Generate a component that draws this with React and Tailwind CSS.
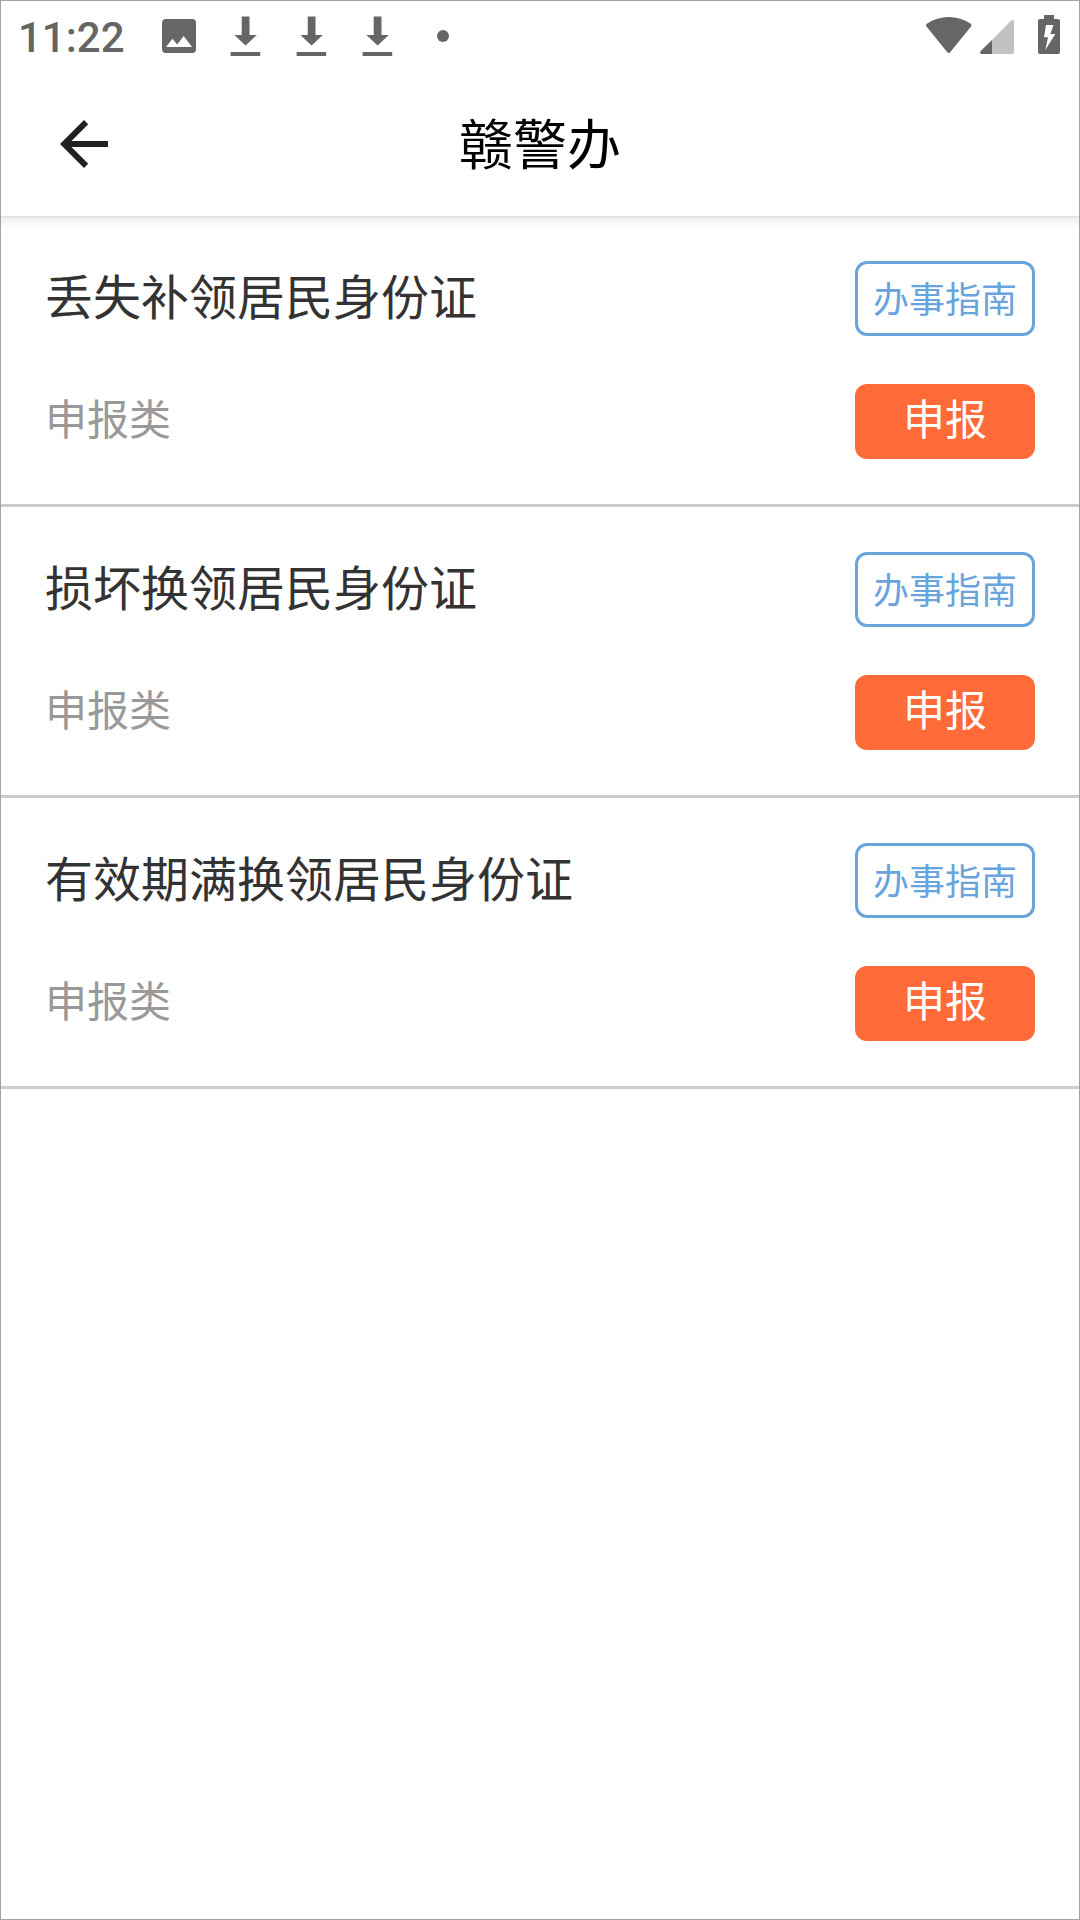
// Page d'un service — liste des démarches avec guide et déclaration

const items = [
  { id: 1, title: '丢失补领居民身份证', type: '申报类' },
  { id: 2, title: '损坏换领居民身份证', type: '申报类' },
  { id: 3, title: '有效期满换领居民身份证', type: '申报类' },
]

function DownloadIcon() {
  return (
    <svg className="w-[66px] h-[72px]" viewBox="0 0 66 72" fill="#666666">
      <path d="M29.700 16.500h7.800V35H44.800L33.600 45.500 22.400 35h7.300z" />
      <path d="M18.600 52h29.600v4H18.600z" />
    </svg>
  )
}

// Barre d'état Android
function StatusBar() {
  return (
    <div className="h-[72px] -mt-px flex items-start justify-between text-[#666666]">
      <div className="flex">
        <span className="w-[145px] pl-[17px] pt-[8px] font-[Roboto] font-medium text-[42px] leading-[60px]">11:22</span>
        <svg className="w-[66px] h-[72px]" viewBox="0 0 66 72" fill="currentColor">
          <path
            fillRule="evenodd"
            d="M20 19h26a4 4 0 0 1 4 4v26a4 4 0 0 1-4 4H20a4 4 0 0 1-4-4V23a4 4 0 0 1 4-4zM20 47h26l-8.300-11-6.500 8.500-4.700-5.700z"
          />
        </svg>
        <DownloadIcon />
        <DownloadIcon />
        <DownloadIcon />
        <svg className="w-[66px] h-[72px]" viewBox="0 0 66 72" fill="currentColor">
          <circle cx="33" cy="36" r="6" />
        </svg>
      </div>

      {/* Wi-Fi, réseau, batterie */}
      <svg className="w-[159px] h-[72px]" viewBox="920 0 159 72" fill="currentColor">
        <path d="M926.500 26.500c-.8-1-.7-2 .3-2.800C940 14.800 957.500 14.800 970.700 23.700c1 .8 1.100 1.800.3 2.800L950.300 52c-1.200 1.400-2 1.400-3.200 0z" />
        <path d="M1014 22v30q0 2-2 2h-20V40l18.500-18.700q3.500-3 3.500.7z" fill="#c2c2c2" />
        <path d="M992 40v14h-10.500q-2.500-.8-.8-3z" />
        <path
          fillRule="evenodd"
          d="M1044 15h10v4h4q2 0 2 2v31q0 2-2 2h-18q-2 0-2-2V21q0-2 2-2h4zM1046 25l-2 12.300h4L1045.300 50 1055.300 34h-5l3.200-9z"
        />
      </svg>
    </div>
  )
}

function Header() {
  return (
    <header className="relative h-[144px] shrink-0 grid grid-cols-[1fr_auto_1fr] items-center px-[47px] after:absolute after:inset-x-0 after:top-full after:h-[12px] after:bg-[linear-gradient(#dedede,#e6e6e6_1px,#f0f0f0_3px,#f9f9f9_7px,#ffffff)]">
      <button aria-label="返回" className="w-[72px] h-[72px]">
        <svg viewBox="0 0 24 24" fill="#212121">
          <path d="M20 11H7.830l5.590-5.590L12 4l-8 8 8 8 1.410-1.410L7.830 13H20v-2z" />
        </svg>
      </button>
      <h1 className="pb-[4px] text-[54px] leading-[78px] text-black">赣警办</h1>
    </header>
  )
}

export default function App() {
  return (
    <main className="w-[1080px] h-[1920px] flex flex-col bg-white border border-[#a5a1a1] font-['Noto_Sans_CJK_SC',sans-serif]">
      <StatusBar />
      <Header />

      <ul>
        {items.map((item) => (
          <li key={item.id} className="h-[291px] pt-[45px] px-[44px] flex flex-col gap-[48px] border-b-[3px] border-[#cccccc]">
            <div className="h-[75px] flex items-start justify-between">
              <span className="text-[48px] leading-[67px] text-[#333333]">{item.title}</span>
              <button className="w-[180px] h-[75px] pb-[2px] rounded-[12px] border-[3px] border-[#6aa4dd] text-[36px] leading-[67px] text-[#6aa4dd]">
                办事指南
              </button>
            </div>
            <div className="h-[75px] flex items-start justify-between">
              <span className="text-[42px] leading-[66px] text-[#999999]">{item.type}</span>
              <button className="w-[180px] h-[75px] pb-[9px] rounded-[12px] bg-[#ff6a39] text-[42px] leading-[66px] text-white">
                申报
              </button>
            </div>
          </li>
        ))}
      </ul>
    </main>
  )
}
